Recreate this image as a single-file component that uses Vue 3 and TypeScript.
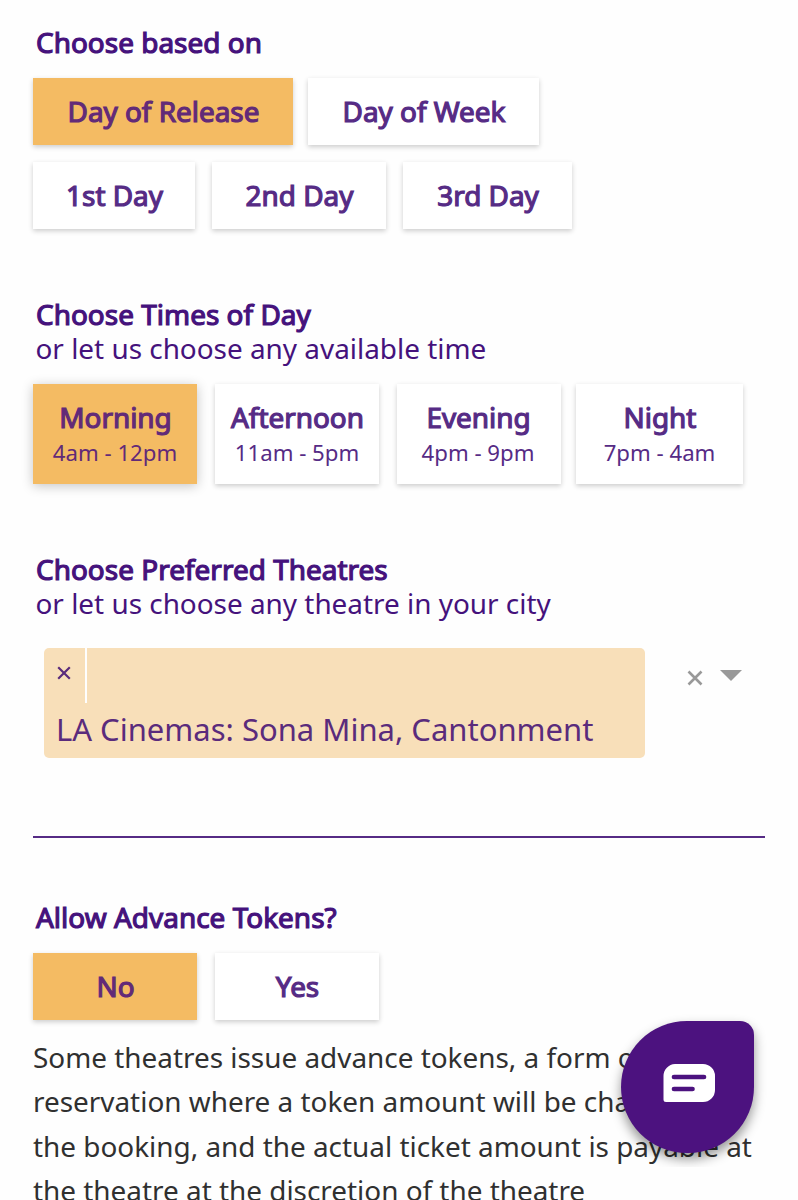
<script setup lang="ts">
import { ref } from 'vue'

interface Slot { name: string; hours: string; size: string }

const bases = [
  { name: 'Day of Release', size: 'w-release' },
  { name: 'Day of Week', size: 'w-week' },
]
const days = [
  { name: '1st Day', size: 'w-first' },
  { name: '2nd Day', size: 'w-second' },
  { name: '3rd Day', size: 'w-third' },
]
const slots: Slot[] = [
  { name: 'Morning', hours: '4am - 12pm', size: 'w-slot' },
  { name: 'Afternoon', hours: '11am - 5pm', size: 'w-slot' },
  { name: 'Evening', hours: '4pm - 9pm', size: 'w-evening' },
  { name: 'Night', hours: '7pm - 4am', size: 'w-night' },
]
const tokenNote = [
  'Some theatres issue advance tokens, a form of',
  'reservation where a token amount will be charged for',
  'the booking, and the actual ticket amount is payable at',
  'the theatre at the discretion of the theatre',
]
const base = ref('Day of Release')
const slot = ref('Morning')
const tokens = ref('No')
</script>

<template>
  <main class="page">
    <section class="basis">
      <h2>Choose based on</h2>
      <div class="row basis-row">
        <button v-for="b in bases" :key="b.name" :class="['btn', b.size, { on: base === b.name }]" @click="base = b.name">{{ b.name }}</button>
      </div>
      <div class="row day-row">
        <button v-for="d in days" :key="d.name" :class="['btn', d.size]">{{ d.name }}</button>
      </div>
    </section>

    <section class="times">
      <h2>Choose Times of Day</h2>
      <p class="sub">or let us choose any available time</p>
      <div class="row slot-row">
        <button v-for="s in slots" :key="s.name" :class="['btn', 'slot', s.size, { on: slot === s.name }]" @click="slot = s.name">
          <span class="name">{{ s.name }}</span>
          <span class="hours">{{ s.hours }}</span>
        </button>
      </div>
    </section>

    <section class="theatres">
      <h2>Choose Preferred Theatres</h2>
      <p class="sub">or let us choose any theatre in your city</p>
      <div class="select">
        <div class="chip">
          <div class="remove">
            <svg width="14" height="14" viewBox="0 0 14 14"><path d="M1.2 1.2 12.8 12.8M12.8 1.2 1.2 12.8" /></svg>
          </div>
          <div class="chip-label">LA Cinemas: Sona Mina, Cantonment</div>
        </div>
        <svg class="clear" width="16" height="16" viewBox="0 0 16 16"><path d="M1.5 1.5 14.5 14.5M14.5 1.5 1.5 14.5" /></svg>
        <svg class="arrow" width="22" height="11" viewBox="0 0 22 11"><path d="M0 0H22L11 11Z" /></svg>
      </div>
    </section>

    <hr />

    <section class="advance">
      <h2>Allow Advance Tokens?</h2>
      <div class="row token-row">
        <button v-for="t in ['No', 'Yes']" :key="t" :class="['btn', 'w-slot', { on: tokens === t }]" @click="tokens = t">{{ t }}</button>
      </div>
      <p class="note"><span v-for="line in tokenNote" :key="line">{{ line }}</span></p>
    </section>

    <button class="chat" aria-label="Chat">
      <svg width="52" height="38" viewBox="0 0 52 38">
        <path class="bubble" d="M12 0H40A12 12 0 0 1 52 12V26A12 12 0 0 1 40 38H3A2.500 2.500 0 0 1 .5 35.500V12A12 12 0 0 1 12 0Z" />
        <path class="lines" d="M11 13H41M11 25H29.500" />
      </svg>
    </button>
  </main>
</template>

<style>
body { background: #fefefe; overflow: hidden; }
</style>

<style scoped>
.page {
  position: relative;
  box-sizing: border-box;
  width: 798px;
  height: 1200px;
  padding: 22px 33px 0;
  overflow: hidden;
  font-family: "Noto Sans", sans-serif;
  font-size: 27.900px;
  color: #45127c;
}
h2, p { margin: 0; white-space: nowrap; }
h2 {
  padding: 3px 0 0 3px;
  font-size: 27.900px;
  font-weight: 400;
  line-height: 34px;
  letter-spacing: 0.040px;
  -webkit-text-stroke: 1.200px currentColor;
}
.sub {
  padding-left: 2.500px;
  line-height: 34px;
}
.row { display: flex; }
.btn {
  flex: none;
  height: 67px;
  padding: 0 0 0 1px;
  border: 0;
  background: #fff;
  box-shadow: 0 2px 5px rgba(0, 0, 0, 0.2);
  color: #562b85;
  font: 27.900px/67px "Noto Sans", sans-serif;
  -webkit-text-stroke: 1.200px currentColor;
  white-space: nowrap;
}
.btn.on { background: #f4bb63; color: #622a78; }
.w-release { width: 260px; }
.w-week { width: 231px; }
.w-first { width: 162px; }
.w-second { width: 174px; }
.w-third { width: 169px; }
.w-slot { width: 164px; }
.w-night { width: 167px; }
.basis { height: 272px; }
.basis-row { gap: 15px; margin-top: 19px; }
.day-row { gap: 17px; margin-top: 17px; }
.times { height: 255px; }
.slot-row { gap: 18px; margin-top: 19px; }
.slot { display: flex; flex-direction: column; align-items: center; height: 100px; }
.slot.on { box-shadow: 0 2px 11px rgba(0, 0, 0, 0.23); }
.w-evening { width: 164px; padding: 0 1px 0 0; }
.w-night { margin-left: -3px; }
.name { height: 35px; margin-top: 13px; line-height: 40px; }
.hours { height: 40px; margin-left: -1px; font-size: 22.200px; line-height: 42px; -webkit-text-stroke: 0; }
.select { display: flex; align-items: flex-start; margin-top: 28px; padding-left: 11px; }
.chip { width: 601px; height: 110px; border-radius: 5px; background: #f8dfb9; color: #5a2b7c; }
.remove { box-sizing: border-box; width: 43px; height: 55px; padding: 18px 0 0 13px; border-right: 2px solid #fefefe; }
.remove svg, .clear, .arrow { display: block; fill: none; stroke: #5a2b7c; stroke-width: 2.200; }
.chip-label { padding-left: 12px; font-size: 31px; line-height: 52px; white-space: nowrap; }
.clear { margin: 22px 0 0 42px; stroke: #999; stroke-width: 2.600; }
.arrow { margin: 22px 0 0 17px; fill: #999; stroke: none; }
hr { height: 2px; margin: 0; border: 0; background: #562b85; width: 732px; }
.theatres { height: 287px; }
.advance { padding-top: 59px; }
.token-row { gap: 18px; margin-top: 19px; }
.note { margin-top: 15px; color: #303030; line-height: 44.400px; }
.note span { display: block; }
.chat {
  position: absolute;
  top: 1021px;
  left: 621px;
  display: flex;
  align-items: center;
  justify-content: center;
  width: 133px;
  height: 132px;
  padding: 0 0 8px 3px;
  border: 0;
  border-radius: 66px 14px 66px 66px;
  background: #4c127f;
  box-shadow: 0 6px 12px rgba(0, 0, 0, 0.42);
  clip-path: inset(-10px -20px -14px -20px);
}
.bubble { fill: #fff; }
.lines { fill: none; stroke: #4c127f; stroke-width: 4.700; stroke-linecap: round; }
</style>
